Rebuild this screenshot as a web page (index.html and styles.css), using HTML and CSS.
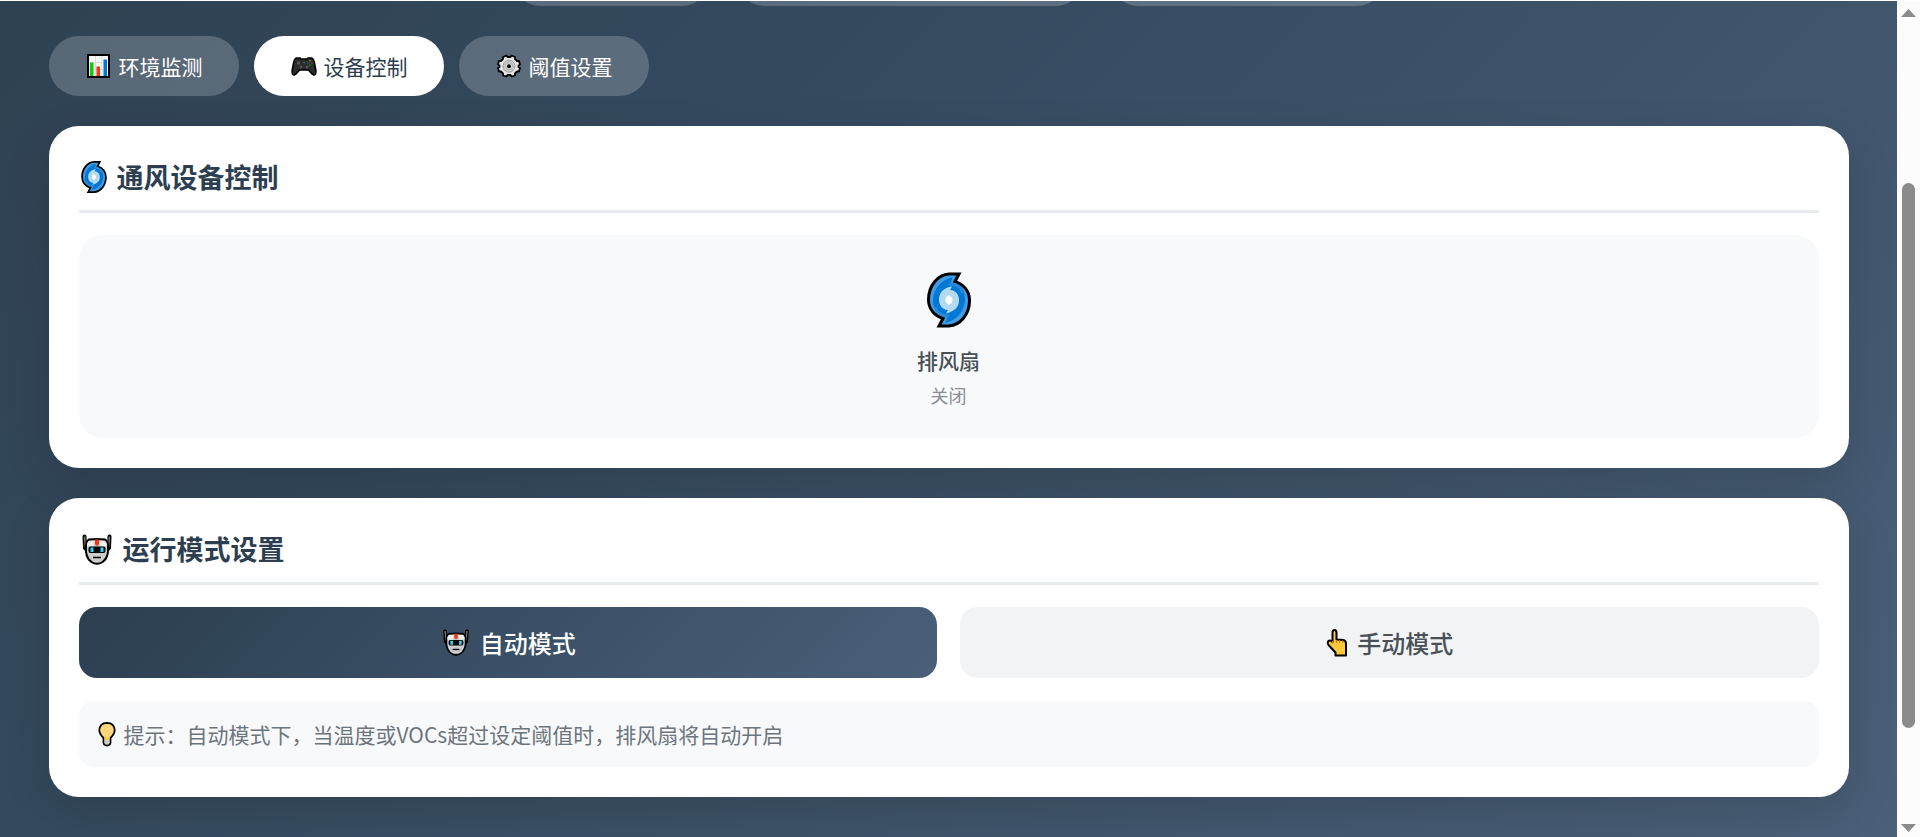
FILE: index.html
```html
<!DOCTYPE html>
<html lang="zh-CN">
  <head>
    <meta charset="UTF-8" />
    <meta name="viewport" content="width=device-width, initial-scale=1.0" />
    <title>设备控制</title>
    <link rel="stylesheet" href="styles.css">
  </head>
  <body>
    <svg class="defs" aria-hidden="true">
      <symbol id="icon-cyclone" viewBox="0 0 44 55">
        <path d="M32 1.500L28 9C37 12 42.500 19 42.500 28C42.500 42 33 53 22 53.500H12L16 46C7 43 1.500 36 1.500 27C1.500 13 11 2 22 1.500Z" fill="#429ce3" stroke="#000" stroke-width="3"/>
        <path d="M25.500 5L23.500 11C33 11 38.500 19 38 28C37 40 29 48 18.500 50L20.500 44C11 44 5.500 36 6 27C7 15 15 7 25.500 5Z" fill="#0078d4"/>
        <path d="M8 35C11 42 16 44 22 43M36 20C33 13 28 11 22 12" fill="none" stroke="#2b88d8" stroke-width="3"/>
        <path d="M25 14L23 17.500C29 18 32 22 32 28C32 35 27 39 19 41L21 37.500C15 37 12 33 12 27C12 20 17 15 25 14Z" fill="#b3daf2"/>
        <path d="M23 22L22.500 23.500C25 24 26 26 25.500 28C25 31 23 32 21 33L21.500 31.500C19 31 18 29 18.500 27C19 24 21 23 23 22Z" fill="#fff"/>
      </symbol>
      <symbol id="icon-robot" viewBox="0 0 30 31">
        <path d="M2.500 2.500L3 14L5 16M27.500 2.500L27 14L25 16" fill="none" stroke="#000" stroke-width="4" stroke-linecap="round"/>
        <path d="M2.500 2.500L3.500 13M27.500 2.500L26.500 13" stroke="#777" stroke-width="1.500"/>
        <path d="M7 5.500Q15 4.500 23 5.500Q26 7 26 12V18Q25 25 20.500 28Q18 29.700 15 29.700Q12 29.700 9.500 28Q5 25 4 18V12Q4 7 7 5.500Z" fill="#ccc" stroke="#000" stroke-width="2"/>
        <path d="M7 7H12V12H5Q5 8 7 7ZM18 7H22Q25 8 25 12H18Z" fill="#eee"/>
        <path d="M13 5.500H17V10L16 11.500H14L13 10Z" fill="#f03a17"/>
        <rect x="6.500" y="12.500" width="17" height="6.500" rx="2" fill="#000"/>
        <path d="M8.500 13.500H11.500V18H8.500ZM18.500 13.500H21.500V18H18.500Z" fill="#31d2f7"/>
        <path d="M11 23.500H19" stroke="#000" stroke-width="1.500"/>
      </symbol>
    </svg>

    <div class="page">
      <main class="container">
        <div class="status-bar">
          <span class="status-pill status-small"></span>
          <span class="status-pill status-large"></span>
          <span class="status-pill status-medium"></span>
        </div>

        <nav class="tabs">
          <button class="tab" type="button">
            <svg class="tab-icon" viewBox="0 0 28 24" aria-hidden="true">
              <rect x="3" y="1" width="21" height="22" fill="#f7f7f7" stroke="#000" stroke-width="2"/>
              <path d="M4 8.500H23M4 15.500H23M10.500 2V22M17 2V22" stroke="#ddd"/>
              <path d="M5 8.500H8.500V22H5Z" fill="#16c60c"/>
              <path d="M11.500 12.500H15V22H11.500Z" fill="#f03a17"/>
              <path d="M18.500 5.500H22V22H18.500Z" fill="#0078d4"/>
            </svg>
            环境监测
          </button>
          <button class="tab active" type="button">
            <svg class="tab-icon" viewBox="0 0 28 24" aria-hidden="true">
              <path d="M6.500 4H10L11 5H17L18 4H21.500Q23.500 4.500 24.500 9L26 17Q26 21 24 21Q22.500 21 18.500 16H9.500Q5.500 21 4 21Q2 21 2 17L3.500 9Q4.500 4.500 6.500 4Z" fill="#2b2b2b" stroke="#000" stroke-width="1.500"/>
              <circle cx="8.500" cy="9" r="1.700" fill="#555"/>
              <circle cx="11" cy="13" r="1.500" fill="#555"/>
              <circle cx="17" cy="13" r="1.500" fill="#555"/>
              <path d="M13.500 8H14.500V9H13.500Z" fill="#999"/>
              <circle cx="20" cy="6.800" r=".8" fill="#c9a100"/>
              <circle cx="22" cy="9" r=".8" fill="#d13438"/>
              <circle cx="18" cy="9" r=".8" fill="#0078d4"/>
              <circle cx="20" cy="11" r=".8" fill="#16a80c"/>
            </svg>
            设备控制
          </button>
          <button class="tab" type="button">
            <svg class="tab-icon" viewBox="0 0 28 24" aria-hidden="true">
              <path d="M11.500 1.500L12.500 3H15.500L16.500 1.500L20 3V5L22 7H24L25 10.500L23.500 11.500V13L25 14L24 17.500H22L20 19.500V21.500L16.500 22.500L15.500 21H12.500L11.500 22.500L8 21.500V19.500L6 17.500H4L3 14L4.500 13V11.500L3 10.500L4 7H6L8 5V3Z" fill="#e6e6e6" stroke="#000" stroke-width="1.800" stroke-linejoin="round"/>
              <circle cx="14" cy="12.200" r="6" fill="#ccc" stroke="#999"/>
              <circle cx="14" cy="12.200" r="3.500" fill="#e6e6e6" stroke="#aaa"/>
              <circle cx="14" cy="12.200" r="2" fill="#000"/>
            </svg>
            阈值设置
          </button>
        </nav>

        <section class="card">
          <h2 class="card-title">
            <svg class="title-cyclone" aria-hidden="true"><use href="#icon-cyclone"/></svg>
            通风设备控制
          </h2>
          <div class="device">
            <svg class="device-icon" aria-hidden="true"><use href="#icon-cyclone"/></svg>
            <div class="device-name">排风扇</div>
            <div class="device-status">关闭</div>
          </div>
        </section>

        <section class="card">
          <h2 class="card-title">
            <svg class="title-robot" aria-hidden="true"><use href="#icon-robot"/></svg>
            运行模式设置
          </h2>
          <div class="modes">
            <button class="mode active" type="button">
              <svg class="mode-robot" aria-hidden="true"><use href="#icon-robot"/></svg>
              自动模式
            </button>
            <button class="mode" type="button">
              <svg class="mode-hand" viewBox="0 0 24 28" aria-hidden="true">
                <path d="M7.500 3.500Q7.500 1 9.500 1Q11.500 1 11.500 3.500V10.500L18 11Q21 11.500 21 14.500V26.500H10.500V23.500L3.500 16Q2 14 3 12.500Q5 10.500 7.500 13Z" fill="#ffc83d" stroke="#000" stroke-width="2" stroke-linejoin="round"/>
                <path d="M11.500 11V14M14.500 11V14M17.500 11.500V14M7.500 12V15" stroke="#d67d00" stroke-width="1"/>
              </svg>
              手动模式
            </button>
          </div>
          <p class="hint">
            <svg class="hint-icon" viewBox="0 0 20 26" aria-hidden="true">
              <path d="M10 1.800Q17.500 2 17.700 9.500Q17.500 13 13.500 17V21Q13.500 24.500 10 24.500Q6.500 24.500 6.500 21V17Q2.500 13 2.300 9.500Q2.500 2 10 1.800Z" fill="#ffd67a" stroke="#000" stroke-width="1.800"/>
              <path d="M7.500 15L10 17.500L12.500 15V19H7.500Z" fill="#ffc83d"/>
              <path d="M7.500 19H12.500V21.500Q12.500 23.500 10 23.500Q7.500 23.500 7.500 21.500Z" fill="#ccc"/>
            </svg>
            提示：自动模式下，当温度或VOCs超过设定阈值时，排风扇将自动开启
          </p>
        </section>
      </main>
    </div>

    <div class="scrollbar" aria-hidden="true">
      <svg class="scroll-arrow" viewBox="0 0 15 8"><path d="M7.500 0L15 8H0Z"/></svg>
      <div class="scroll-track">
        <div class="scroll-thumb"></div>
      </div>
      <svg class="scroll-arrow" viewBox="0 0 15 8"><path d="M0 0H15L7.500 8Z"/></svg>
    </div>
  </body>
</html>
```
FILE: styles.css
```css
* {
  box-sizing: border-box;
  margin: 0;
  padding: 0;
}
body {
  display: flex;
  min-height: 100vh;
  border-top: 1px solid #fff;
  font-family: "Noto Sans CJK SC", sans-serif;
  font-size: 21px;
}
button {
  border: none;
  font: inherit;
  cursor: pointer;
}
svg {
  flex: none;
}
.defs {
  position: absolute;
  width: 0;
  height: 0;
}
.page {
  flex: 1;
  padding: 0 48px 40px;
  background: linear-gradient(135deg, #2f4252 0%, #34495e 30%, #4a6078 100%);
}
.container {
  max-width: 1800px;
  margin: 0 auto;
}

/* status bar, scrolled almost out of view */
.status-bar {
  display: flex;
  justify-content: center;
  align-items: flex-end;
  gap: 24px;
  height: 5px;
  margin-bottom: 30px;
  overflow: hidden;
}
.status-pill {
  flex: none;
  height: 60px;
  border-radius: 30px;
  background: rgba(255, 255, 255, 0.2);
}
.status-small {
  width: 200px;
}
.status-medium {
  width: 277px;
}
.status-large {
  width: 350px;
}

.tabs {
  display: flex;
  gap: 15px;
  margin-bottom: 30px;
}
.tab {
  display: flex;
  align-items: center;
  gap: 6px;
  height: 60px;
  padding: 0 36px;
  border-radius: 30px;
  background: rgba(255, 255, 255, 0.2);
  color: #fff;
}
.tab.active {
  background: #fff;
  color: #2c3e50;
}
.tab-icon {
  width: 28px;
  height: 24px;
}

.card {
  margin-bottom: 30px;
  padding: 30px;
  border-radius: 30px;
  background: #fff;
  box-shadow: 0 15px 45px rgba(0, 0, 0, 0.15);
}
.card:last-child {
  margin-bottom: 0;
}
.card-title {
  display: flex;
  align-items: center;
  gap: 8px;
  margin-bottom: 22px;
  padding-bottom: 12px;
  border-bottom: 3px solid #e9ecef;
  color: #2c3e50;
  font-size: 27px;
  line-height: 42px;
}
.title-cyclone {
  width: 30px;
  height: 32px;
}
.title-robot {
  width: 36px;
  height: 31px;
}

.device {
  padding: 30px;
  border-radius: 24px;
  background: #f8f9fa;
  text-align: center;
}
.device-icon {
  display: block;
  width: 44px;
  height: 70px;
  margin: 0 auto 10px;
}
.device-name {
  margin-bottom: 8px;
  color: #495057;
  font-weight: 500;
  line-height: 30px;
}
.device-status {
  color: #868e96;
  font-size: 18px;
  line-height: 25px;
}

.modes {
  display: grid;
  grid-template-columns: 1fr 1fr;
  gap: 23px;
  margin-bottom: 23px;
}
.mode {
  display: flex;
  justify-content: center;
  align-items: center;
  gap: 8px;
  height: 71px;
  border-radius: 18px;
  background: #f1f3f5;
  color: #495057;
  font-size: 24px;
  font-weight: 500;
}
.mode.active {
  background: linear-gradient(135deg, #2c3e50, #34495e 30%, #4a6078);
  color: #fff;
}
.mode-robot {
  width: 32px;
  height: 27px;
}
.mode-hand {
  width: 24px;
  height: 28px;
}

.hint {
  display: flex;
  align-items: center;
  gap: 7px;
  padding: 18px;
  border-radius: 15px;
  background: #f8f9fa;
  color: #6c757d;
  line-height: 30px;
}
.hint-icon {
  width: 20px;
  height: 26px;
}

.scrollbar {
  display: flex;
  flex-direction: column;
  align-items: center;
  width: 23px;
  padding: 8px 0 5px;
  background: #fcfcfc;
}
.scroll-arrow {
  width: 15px;
  height: 8px;
  fill: #8b8b8b;
}
.scroll-track {
  flex: 1;
  padding-top: 166px;
}
.scroll-thumb {
  width: 13px;
  height: 85%;
  border-radius: 7px;
  background: #8b8b8b;
}
```
